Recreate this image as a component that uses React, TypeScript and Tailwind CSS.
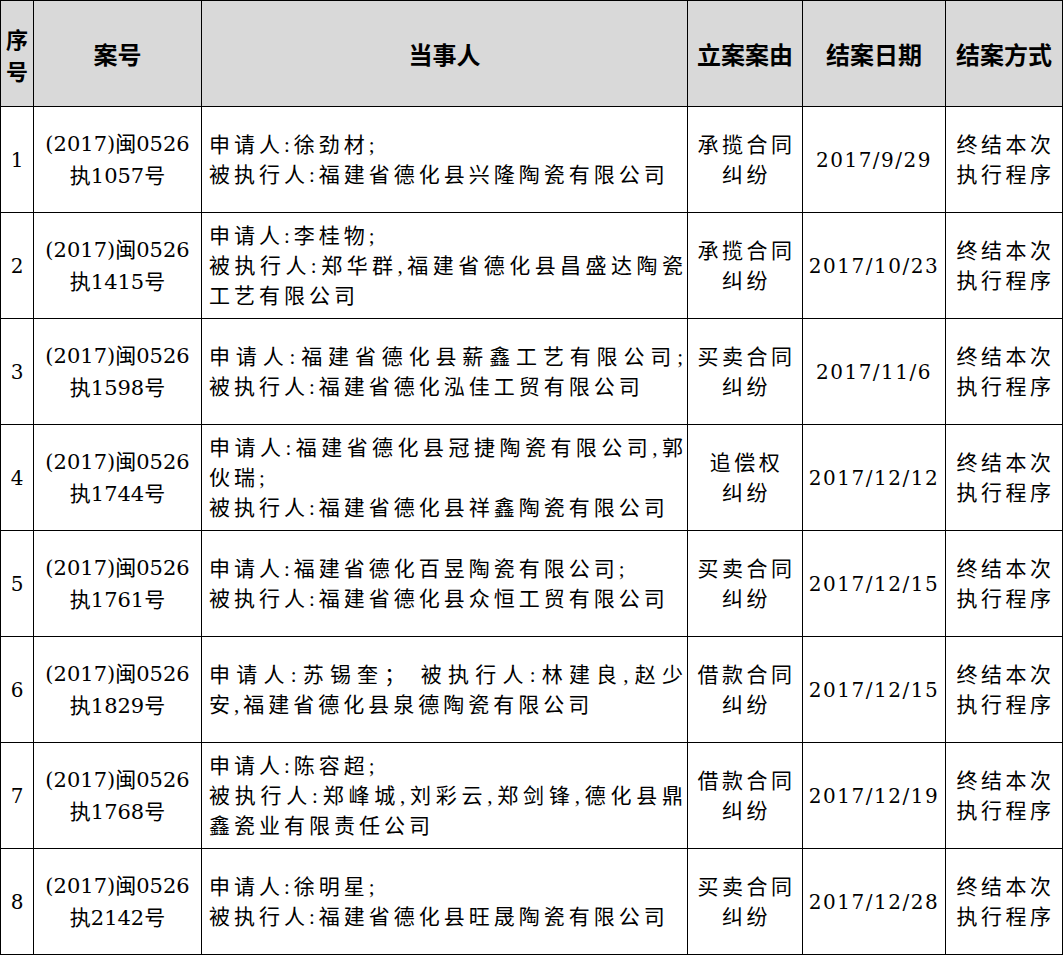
import React from "react";

type Row = {
  no: string;
  caseNo: string;
  parties: [string, boolean][];
  reason: string[];
  date: string;
  method: string[];
};

// second value: line is stretched to the full cell width (wrapped line)
const rows: Row[] = [
  {
    no: "1",
    caseNo: "执1057号",
    parties: [["申请人:徐劲材;", false], ["被执行人:福建省德化县兴隆陶瓷有限公司", false]],
    reason: ["承揽合同", "纠纷"],
    date: "2017/9/29",
    method: ["终结本次", "执行程序"],
  },
  {
    no: "2",
    caseNo: "执1415号",
    parties: [["申请人:李桂物;", false], ["被执行人:郑华群,福建省德化县昌盛达陶瓷", true], ["工艺有限公司", false]],
    reason: ["承揽合同", "纠纷"],
    date: "2017/10/23",
    method: ["终结本次", "执行程序"],
  },
  {
    no: "3",
    caseNo: "执1598号",
    parties: [["申请人:福建省德化县薪鑫工艺有限公司;", true], ["被执行人:福建省德化泓佳工贸有限公司", false]],
    reason: ["买卖合同", "纠纷"],
    date: "2017/11/6",
    method: ["终结本次", "执行程序"],
  },
  {
    no: "4",
    caseNo: "执1744号",
    parties: [["申请人:福建省德化县冠捷陶瓷有限公司,郭", true], ["伙瑞;", false], ["被执行人:福建省德化县祥鑫陶瓷有限公司", false]],
    reason: ["追偿权", "纠纷"],
    date: "2017/12/12",
    method: ["终结本次", "执行程序"],
  },
  {
    no: "5",
    caseNo: "执1761号",
    parties: [["申请人:福建省德化百昱陶瓷有限公司;", false], ["被执行人:福建省德化县众恒工贸有限公司", false]],
    reason: ["买卖合同", "纠纷"],
    date: "2017/12/15",
    method: ["终结本次", "执行程序"],
  },
  {
    no: "6",
    caseNo: "执1829号",
    parties: [["申请人:苏锡奎；\u00a0被执行人:林建良,赵少", true], ["安,福建省德化县泉德陶瓷有限公司", false]],
    reason: ["借款合同", "纠纷"],
    date: "2017/12/15",
    method: ["终结本次", "执行程序"],
  },
  {
    no: "7",
    caseNo: "执1768号",
    parties: [["申请人:陈容超;", false], ["被执行人:郑峰城,刘彩云,郑剑锋,德化县鼎", true], ["鑫瓷业有限责任公司", false]],
    reason: ["借款合同", "纠纷"],
    date: "2017/12/19",
    method: ["终结本次", "执行程序"],
  },
  {
    no: "8",
    caseNo: "执2142号",
    parties: [["申请人:徐明星;", false], ["被执行人:福建省德化县旺晟陶瓷有限公司", false]],
    reason: ["买卖合同", "纠纷"],
    date: "2017/12/28",
    method: ["终结本次", "执行程序"],
  },
];

const serif = "font-['DejaVu_Serif','Noto_Sans_CJK_SC',serif]";
const body = "font-['Liberation_Serif','Noto_Sans_CJK_SC',serif]";
const head = "font-['Noto_Sans_CJK_SC',sans-serif]";

const cell = "h-[106px] border-r border-b border-black";
const headCell = `${cell} bg-[#d9d9d9] flex items-center justify-center text-[24px] font-bold ${head}`;

export default function App() {
  return (
    <div className="w-[1063px] bg-white text-black">
      <div className="grid grid-cols-[33px_168px_486px_115px_143px_117px] border-l border-t border-black">
        {/* Header */}
        <div className={`${cell} bg-[#d9d9d9] flex items-center justify-center text-[22px] leading-[32px] font-bold text-center ${head}`}>
          序<br />号
        </div>
        <div className={headCell}>案号</div>
        <div className={headCell}>当事人</div>
        <div className={headCell}>立案案由</div>
        <div className={headCell}>结案日期</div>
        <div className={headCell}>结案方式</div>

        {rows.map((r) => (
          <React.Fragment key={r.no}>
            <div className={`${cell} flex items-center justify-center text-[20px] ${serif}`}>
              {r.no}
            </div>
            <div className={`${cell} flex flex-col items-center justify-center text-[21px] leading-[32px] ${serif}`}>
              <span>(2017)闽0526</span>
              <span>{r.caseNo}</span>
            </div>
            <div className={`${cell} flex flex-col justify-center pl-[7px] text-[21px] leading-[30px] tracking-[4px] whitespace-nowrap ${body}`}>
              {r.parties.map(([p, full], i) => (
                <span key={i} className={full ? "block text-justify [text-align-last:justify]" : "block"}>
                  {p}
                </span>
              ))}
            </div>
            <div className={`${cell} flex flex-col items-center justify-center pl-[3px] text-[21px] leading-[30px] tracking-[3.5px] ${body}`}>
              {r.reason.map((p, i) => (
                <span key={i}>{p}</span>
              ))}
            </div>
            <div className={`${cell} flex items-center justify-center text-[20px] tracking-[1.5px] ${serif}`}>
              {r.date}
            </div>
            <div className={`${cell} flex flex-col items-center justify-center pl-[3px] text-[21px] leading-[30px] tracking-[3.5px] ${body}`}>
              {r.method.map((p, i) => (
                <span key={i}>{p}</span>
              ))}
            </div>
          </React.Fragment>
        ))}
      </div>
    </div>
  );
}
